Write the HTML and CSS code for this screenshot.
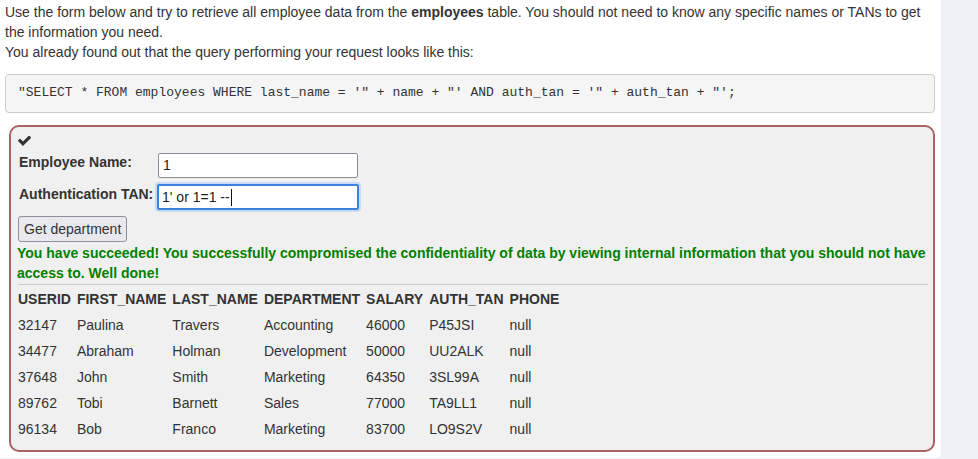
FILE: index.html
```html
<!DOCTYPE html>
<html>
<head>
<meta charset="utf-8">
<link rel="stylesheet" href="styles.css">
</head>
<body>
<div class="page">
  <div class="panel">
    <p class="intro">Use the form below and try to retrieve all employee data from the <b>employees</b> table. You should not need to know any specific names or TANs to get the information you need.<br>You already found out that the query performing your request looks like this:</p>
    <pre class="query">"SELECT * FROM employees WHERE last_name = '" + name + "' AND auth_tan = '" + auth_tan + "';</pre>
    <div class="attack">
      <div class="check">
        <svg width="13" height="10" viewBox="121 402 1550 1120"><path fill="#333" d="M1671 566q0 40-28 68l-724 724-136 136q-28 28-68 28t-68-28l-136-136-362-362q-28-28-28-68t28-68l136-136q28-28 68-28t68 28l294 295 656-657q28-28 68-28t68 28l136 136q28 28 28 68z"/></svg>
      </div>
      <div class="fields">
        <label class="lbl">Employee Name:</label>
        <div class="field"><span>1</span></div>
        <label class="lbl">Authentication TAN:</label>
        <div class="field focused"><span>1' or 1=1 --</span><span class="caret"></span></div>
      </div>
      <button class="btn">Get department</button>
      <p class="feedback">You have succeeded! You successfully compromised the confidentiality of data by viewing internal information that you should not have access to. Well done!</p>
      <hr class="sep">
      <table class="results">
        <tr><th>USERID</th><th>FIRST_NAME</th><th>LAST_NAME</th><th>DEPARTMENT</th><th>SALARY</th><th>AUTH_TAN</th><th>PHONE</th></tr>
        <tr><td>32147</td><td>Paulina</td><td>Travers</td><td>Accounting</td><td>46000</td><td>P45JSI</td><td>null</td></tr>
        <tr><td>34477</td><td>Abraham</td><td>Holman</td><td>Development</td><td>50000</td><td>UU2ALK</td><td>null</td></tr>
        <tr><td>37648</td><td>John</td><td>Smith</td><td>Marketing</td><td>64350</td><td>3SL99A</td><td>null</td></tr>
        <tr><td>89762</td><td>Tobi</td><td>Barnett</td><td>Sales</td><td>77000</td><td>TA9LL1</td><td>null</td></tr>
        <tr><td>96134</td><td>Bob</td><td>Franco</td><td>Marketing</td><td>83700</td><td>LO9S2V</td><td>null</td></tr>
      </table>
    </div>
  </div>
</div>
</body>
</html>
```
FILE: styles.css
```css
* { box-sizing: border-box; }
html, body { margin: 0; padding: 0; }
body {
  background: #f0f1f6;
  font-family: "Liberation Sans", Arial, sans-serif;
  font-size: 14px;
  line-height: 20px;
  color: #333;
}
.page { width: 978px; height: 459px; overflow: hidden; }
.panel {
  width: 941px;
  background: #fff;
  padding: 2px 6px 6px 5px;
  border-bottom-right-radius: 5px;
}
.intro { margin: 0 0 12px 0; }
.intro b { font-weight: bold; }
.query {
  margin: 0 0 12px 0;
  padding: 9px 12px 10px 12px;
  background: #f5f5f5;
  border: 1px solid #ccc;
  border-radius: 4px;
  font-family: "Liberation Mono", "Courier New", monospace;
  font-size: 13px;
  line-height: 18px;
  color: #333;
  white-space: pre;
}
.attack {
  margin-left: 4px;
  width: 926px;
  background: #f0f0f0;
  border: 2px solid #a86464;
  border-radius: 10px;
  padding: 7px 5px 7px 5px;
}
.check { height: 19px; padding: 2px 0 0 2px; }
.check svg { display: block; }
.fields {
  display: grid;
  grid-template-columns: 137px 200px;
  column-gap: 2px;
  row-gap: 7px;
  padding-left: 3px;
  align-items: start;
}
.lbl { font-weight: bold; line-height: 20px; margin-top: -1px; }
.field {
  height: 25px;
  background: #fff;
  border: 1px solid #8d8d99;
  border-radius: 2px;
  padding: 0 4px;
  line-height: 23px;
  color: #222;
  display: flex;
  align-items: center;
  white-space: pre;
}
.field.focused {
  border: 2px solid #3b82dc;
  box-shadow: 0 0 0 2px #c6dcf5;
  padding: 0 3px;
  margin-left: -1px;
  width: 202px;
  height: 26px;
  margin-top: -1px;
}
.caret {
  display: inline-block;
  width: 1px;
  height: 17px;
  background: #111;
  margin-left: 1px;
}
.btn {
  display: block;
  margin: 6px 0 0 2px;
  height: 26px;
  padding: 0 5px;
  font-family: "Liberation Sans", Arial, sans-serif;
  font-size: 14px;
  color: #333;
  background: #e9e9ed;
  border: 1px solid #8f8f9d;
  border-radius: 3px;
}
.feedback {
  margin: 1px 0 0 1px;
  color: #008000;
  font-weight: bold;
  line-height: 20px;
}
.sep {
  margin: 1px 0 0 2px;
  border: 0;
  border-top: 1px solid #ccc;
  height: 0;
}
.results {
  border-collapse: separate;
  border-spacing: 2px;
  margin: 0 0 0 -2px;
}
.results th, .results td {
  padding: 2px 2px;
  text-align: left;
  vertical-align: top;
  line-height: 20px;
  white-space: nowrap;
}
.results th { font-weight: bold; color: #333; }
.results td { color: #333; }
```
